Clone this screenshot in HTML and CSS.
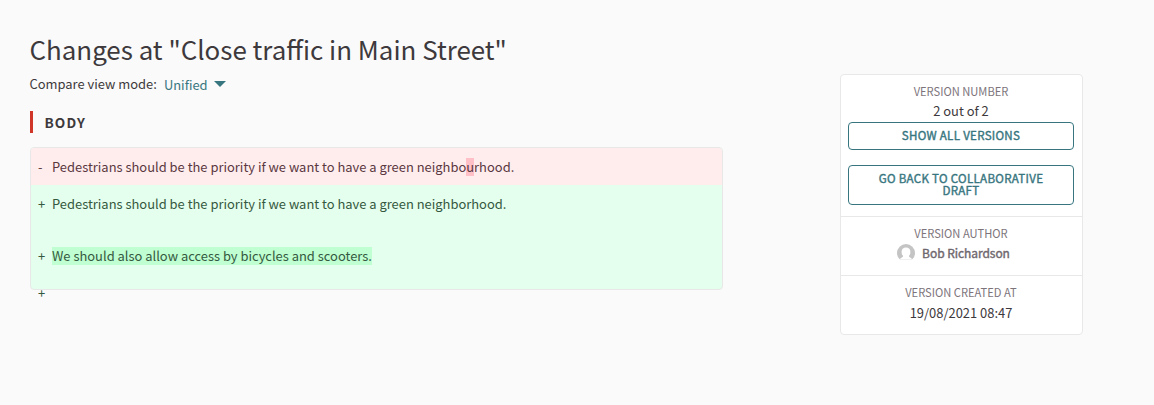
FILE: index.html
```
<!DOCTYPE html>
<html lang="en">
<head>
<meta charset="utf-8">
<title>Changes at "Close traffic in Main Street"</title>
<link rel="stylesheet" href="styles.css">
</head>
<body>
<div class="page">
  <main class="content">
    <h1 class="title">Changes at "Close traffic in Main Street"</h1>
    <div class="mode">
      <span class="mode-label">Compare view mode:</span>
      <a class="mode-value">Unified</a>
      <span class="caret"></span>
    </div>
    <h2 class="section-heading">BODY</h2>
    <div class="diff">
      <div class="line del"><span class="sign">-</span><span>Pedestrians should be the priority if we want to have a green neighbo<mark class="removed">u</mark>rhood.</span></div>
      <div class="line ins"><span class="sign">+</span><span>Pedestrians should be the priority if we want to have a green neighborhood.</span></div>
      <div class="line ins tall"><span class="sign">+</span><span><mark class="added">We should also allow access by bicycles and scooters.</mark></span></div>
      <div class="line last"><span class="sign">+</span></div>
    </div>
  </main>
  <aside class="card">
    <section class="block actions">
      <div class="label">VERSION NUMBER</div>
      <div class="value">2 out of 2</div>
      <a class="button">SHOW ALL VERSIONS</a>
      <a class="button">GO BACK TO COLLABORATIVE DRAFT</a>
    </section>
    <section class="block author-block">
      <div class="label">VERSION AUTHOR</div>
      <div class="author">
        <svg class="avatar" viewBox="0 0 18 18"><defs><clipPath id="c"><path d="M0 0H18V15.500H0z"/></clipPath></defs><g clip-path="url(#c)"><circle cx="9" cy="9" r="9" fill="#c4c4c4"/><path d="M9 3.500c2.900 0 4.400 1.800 4.400 4.400 0 1.800-.6 3.200-1.500 4.100.1 1 1.300 1.600 2.600 2.200L15.300 18H2.700l.8-3.800c1.300-.6 2.500-1.200 2.600-2.200-.9-.9-1.500-2.300-1.500-4.100C4.600 5.300 6.100 3.500 9 3.500z" fill="#fff"/></g></svg>
        <span>Bob Richardson</span>
      </div>
    </section>
    <section class="block created-block">
      <div class="label">VERSION CREATED AT</div>
      <div class="value">19/08/2021 08:47</div>
    </section>
  </aside>
</div>
</body>
</html>
```
FILE: styles.css
```
* { box-sizing: border-box; }
body {
  margin: 0;
  background: #fafafa;
  color: #3d393c;
  font-family: "Noto Sans CJK SC", "Liberation Sans", sans-serif;
  font-size: 12.930px;
  line-height: 18px;
}
.page {
  display: flex;
  justify-content: space-between;
  align-items: flex-start;
  height: 405px;
  padding: 0 71px 0 30px;
}
.content { width: 693px; padding-top: 31px; }
.title { margin: 0 0 0 -0.5px; font-size: 25.920px; font-weight: 400; line-height: 36px; white-space: nowrap; }
.mode { display: flex; align-items: center; height: 18px; margin: 8px 0 0 -0.5px; }
.mode-value { margin: 2px 6.500px 0 7px; color: #38767f; }
.caret { border: 6px solid transparent; border-top-color: #38767f; border-bottom: 0; }
.section-heading {
  margin: 18px 0 14px;
  padding-left: 11.500px;
  border-left: 3px solid #cf3628;
  font-size: 13.600px;
  font-weight: 700;
  letter-spacing: 1.100px;
  line-height: 22px;
}
.diff { height: 143px; border: 1px solid #e8e8e8; border-radius: 4px; background: #e4ffed; }
.line { display: flex; height: 37px; padding: 10px 0 0 7px; color: #345840; white-space: nowrap; }
.line.del { background: #ffedee; color: #5a383f; border-radius: 3px 3px 0 0; }
.line.tall { height: 67px; padding-top: 25px; }
.line.last { padding-top: 0; margin-top: -5px; }
.sign { width: 14px; }
mark { display: inline-block; height: 18px; color: inherit; }
.removed { background: #ffc0c8; }
.added { background: #bfffd1; }
.card {
  width: 243px;
  margin-top: 74px;
  border: 1px solid #e8e8e8;
  border-radius: 4px;
  background: #fff;
  text-align: center;
}
.block { padding: 7px 8px 0 7px; border-bottom: 1px solid #e8e8e8; }
.block:last-child { border-bottom: 0; }
.actions { height: 142px; }
.author-block { height: 59px; }
.created-block { height: 58px; }
.label { font-size: 11.150px; color: #7d747b; }
.value { margin-top: 2px; }
.actions .value { margin-bottom: 2px; }
.created-block .value { margin-top: 3px; }
.button {
  display: flex;
  align-items: center;
  justify-content: center;
  min-height: 28px;
  padding: 6px 24px 8px;
  border: 1px solid #38767f;
  border-radius: 4px;
  color: #38767f;
  font-size: 11.550px;
  font-weight: 400;
  letter-spacing: 0.3px;
  -webkit-text-stroke: 0.4px currentColor;
  line-height: 12px;
}
.button + .button { height: 40px; margin-top: 15px; }
.author {
  display: flex;
  align-items: center;
  justify-content: center;
  gap: 7px;
  margin-top: 2px;
  padding-right: 15px;
  color: #6f676e;
  font-size: 12px;
  font-weight: 400;
  letter-spacing: -0.05px;
  -webkit-text-stroke: 0.4px currentColor;
}
.avatar { width: 18px; height: 18px; }
```
